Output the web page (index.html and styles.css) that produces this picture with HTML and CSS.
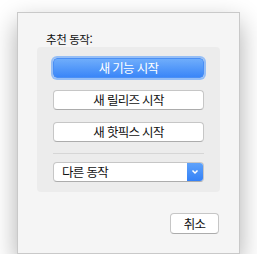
FILE: index.html
```html
<!DOCTYPE html>
<html lang="ko">
<head>
    <meta charset="UTF-8">
    <title>추천 동작</title>
    <link rel="stylesheet" href="styles.css">
</head>
<body>
    <div class="window">
        <div class="label">추천 동작:</div>
        <div class="group">
            <div class="btn primary">새 기능 시작</div>
            <div class="btn">새 릴리즈 시작</div>
            <div class="btn">새 핫픽스 시작</div>
            <div class="sep"></div>
            <div class="popup">
                <span class="popup-text">다른 동작</span>
                <span class="popup-arrow">
                    <svg width="8" height="6" viewBox="0 0 8 6"><path d="M1.5 1.5 L4 4 L6.5 1.5" fill="none" stroke="#fff" stroke-width="1.5"/></svg>
                </span>
            </div>
        </div>
        <div class="btn cancel">취소</div>
    </div>
</body>
</html>
```

FILE: styles.css
```css
body {
    margin: 0;
    background: #fff;
    font-family: "Noto Sans CJK KR", "Noto Sans", sans-serif;
    color: #111;
}

.window {
    margin: 12px 0 0 17px;
    width: 223px;
    height: 242px;
    box-sizing: border-box;
    border: 1px solid #c9c9c9;
    background: #f5f5f5;
    box-shadow: 0 10px 24px rgba(0, 0, 0, 0.32);
    padding: 19px 19px 0;
    display: flex;
    flex-direction: column;
}

.label {
    margin-left: 9px;
    font-size: 11.5px;
    line-height: 15px;
    height: 15px;
    letter-spacing: -0.4px;
}

.group {
    background: #ececec;
    border-radius: 4px;
    padding: 11px 16px 10px;
    display: flex;
    flex-direction: column;
    gap: 12px;
}

.btn {
    height: 20px;
    box-sizing: border-box;
    background: #fff;
    border: 1px solid #c6c6c6;
    border-bottom-color: #acacac;
    border-radius: 4px;
    font-size: 12.5px;
    line-height: 18px;
    text-align: center;
    letter-spacing: -0.7px;
}

.primary {
    background: linear-gradient(#6fadfb, #3a86f8);
    border: 1px solid #4a8ff5;
    color: #fff;
    box-shadow: 0 0 0 2px rgba(120, 175, 250, 0.75);
}

.sep {
    height: 1px;
    background: #d6d6d6;
    margin: -1px 0 -4px;
}

.popup {
    height: 20px;
    box-sizing: border-box;
    display: flex;
    background: #fff;
    border: 1px solid #c6c6c6;
    border-bottom-color: #acacac;
    border-radius: 4px;
    overflow: hidden;
    font-size: 12.5px;
    line-height: 18px;
}

.popup-text {
    flex: 1;
    padding-left: 8px;
    letter-spacing: -0.7px;
}

.popup-arrow {
    width: 16px;
    background: linear-gradient(#5fa2fa, #3481f7);
    display: flex;
    align-items: center;
    justify-content: center;
}

.cancel {
    align-self: flex-end;
    width: 49px;
    height: 21px;
    line-height: 19px;
    margin-top: 21px;
    margin-right: 1px;
}
```
